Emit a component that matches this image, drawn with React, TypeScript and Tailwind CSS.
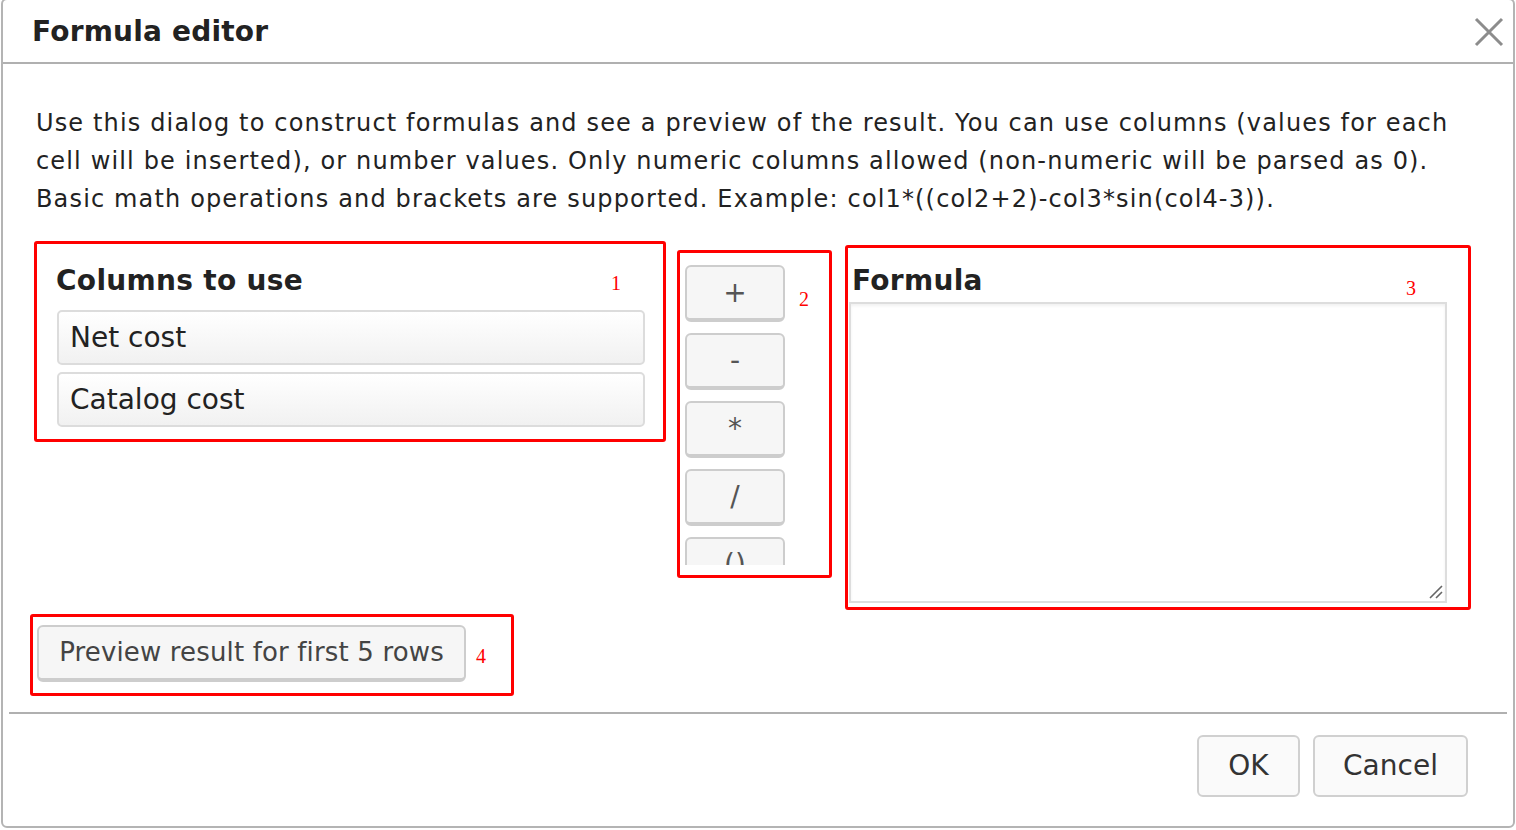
import { useState } from "react";

const columns = ["Net cost", "Catalog cost"];
const operators = ["+", "-", "*", "/", "()"];

const Marker = ({ n, className = "" }: { n: string; className?: string }) => (
  <span className={`font-['Liberation_Serif',serif] text-[20px] leading-none text-[#ff0000] ${className}`}>
    {n}
  </span>
);

export default function App() {
  const [formula, setFormula] = useState("");

  const insert = (value: string) => setFormula((f) => f + value);

  return (
    <div className="w-[1516px] h-[830px] overflow-hidden bg-white pl-[1px] font-['DejaVu_Sans',sans-serif] text-[#222]">
      <div className="mt-[-2px] w-[1514px] rounded-[6px] border-2 border-[#b4b4b4] bg-white">
        {/* Header */}
        <div className="flex h-[64px] items-center justify-between border-b-2 border-[#b0b0b0] pl-[29px] pr-[9px] pt-[2px]">
          <h1 className="text-[28px] font-bold leading-none tracking-[0.2px]">Formula editor</h1>
          <button className="flex h-[30px] w-[30px] items-center justify-center">
            <svg width="30" height="30" viewBox="0 0 30 30">
              <path d="M2 2 L28 28 M28 2 L2 28" stroke="#8c8c8c" strokeWidth="3" />
            </svg>
          </button>
        </div>

        {/* Body */}
        <div className="pl-[27px] pt-[40px]">
          <p className="ml-[6px] text-[24px] leading-[38px] tracking-[1.15px] whitespace-nowrap">
            Use this dialog to construct formulas and see a preview of the result. You can use columns (values for each
            <br />
            cell will be inserted), or number values. Only numeric columns allowed (non-numeric will be parsed as 0).
            <br />
            Basic math operations and brackets are supported. Example: col1*((col2+2)-col3*sin(col4-3)).
          </p>

          <div className="mt-[23px] flex items-start">
            {/* Columns to use */}
            <div className="ml-[4px] w-[632px] rounded-[3px] border-[3px] border-[#ff0000] pb-[12px] pl-[19px] pr-[18px] pt-[20px]">
              <div className="mb-[12px] flex items-baseline justify-between pl-[0px] pr-[24px]">
                <h2 className="text-[28px] font-bold leading-[34px] tracking-[0.3px]">Columns to use</h2>
                <Marker n="1" />
              </div>
              <div className="ml-[1px] flex flex-col gap-[7px]">
                {columns.map((c) => (
                  <button
                    key={c}
                    onClick={() => insert(c)}
                    className="flex h-[55px] items-center rounded-[5px] border-2 border-[#dcdcdc] bg-gradient-to-b from-white to-[#f1f1f1] pl-[11px] text-left text-[28px]"
                  >
                    {c}
                  </button>
                ))}
              </div>
            </div>

            {/* Operators */}
            <div className="ml-[11px] mt-[9px] flex h-[328px] w-[155px] rounded-[3px] border-[3px] border-[#ff0000] pb-[10px] pl-[5px]">
              <div className="flex h-[312px] w-[100px] flex-col gap-[11px] overflow-hidden pt-[12px]">
                {operators.map((op) => (
                  <button
                    key={op}
                    onClick={() => insert(op)}
                    className="flex h-[57px] w-[100px] shrink-0 items-center justify-center rounded-[6px] border-2 border-b-4 border-[#cdcdcd] bg-[#f6f6f6] text-[28px] text-[#555]"
                  >
                    {op}
                  </button>
                ))}
              </div>
              <Marker n="2" className="ml-[14px] mt-[36px]" />
            </div>

            {/* Formula */}
            <div className="ml-[13px] mt-[4px] h-[365px] w-[626px] rounded-[3px] border-[3px] border-[#ff0000] pl-[1px] pt-[16px]">
              <div className="mb-[4px] flex w-[598px] items-baseline justify-between pl-[3px] pr-[31px]">
                <h2 className="text-[28px] font-bold leading-[34px] tracking-[0.3px]">Formula</h2>
                <Marker n="3" className="translate-y-[5px]" />
              </div>
              <div className="relative h-[301px] w-[598px]">
                <textarea
                  value={formula}
                  onChange={(e) => setFormula(e.target.value)}
                  className="block h-full w-full resize-none border-2 border-[#dddddd] bg-white p-2 text-[24px] shadow-[inset_0_2px_3px_rgba(0,0,0,0.06)] outline-none"
                />
                <svg
                  className="pointer-events-none absolute bottom-[4px] right-[4px]"
                  width="14"
                  height="14"
                  viewBox="0 0 14 14"
                >
                  <path d="M1 13 L13 1 M7 13 L13 7" stroke="#666" strokeWidth="1.6" />
                </svg>
              </div>
            </div>
          </div>

          {/* Preview */}
          <div className="mt-[4px] flex h-[82px] w-[484px] items-start rounded-[3px] border-[3px] border-[#ff0000] pl-[4px] pt-[8px]">
            <button className="h-[57px] w-[429px] rounded-[6px] border-2 border-b-4 border-[#cdcdcd] bg-[#f6f6f6] text-[26px] tracking-[0.15px] text-[#444]">
              Preview result for first 5 rows
            </button>
            <Marker n="4" className="ml-[10px] mt-[21px] font-['DejaVu_Sans',sans-serif] text-[17px]" />
          </div>
        </div>

        {/* Footer */}
        <div className="mx-[6px] mt-[16px] border-t-2 border-[#b0b0b0]" />
        <div className="flex justify-end gap-[13px] pb-[29px] pr-[45px] pt-[21px]">
          <button className="h-[62px] w-[103px] rounded-[6px] border-2 border-[#d0d0d0] bg-[#fafafa] text-[28px] text-[#333]">
            OK
          </button>
          <button className="h-[62px] w-[155px] rounded-[6px] border-2 border-[#d0d0d0] bg-[#fafafa] text-[28px] text-[#333]">
            Cancel
          </button>
        </div>
      </div>
    </div>
  );
}
